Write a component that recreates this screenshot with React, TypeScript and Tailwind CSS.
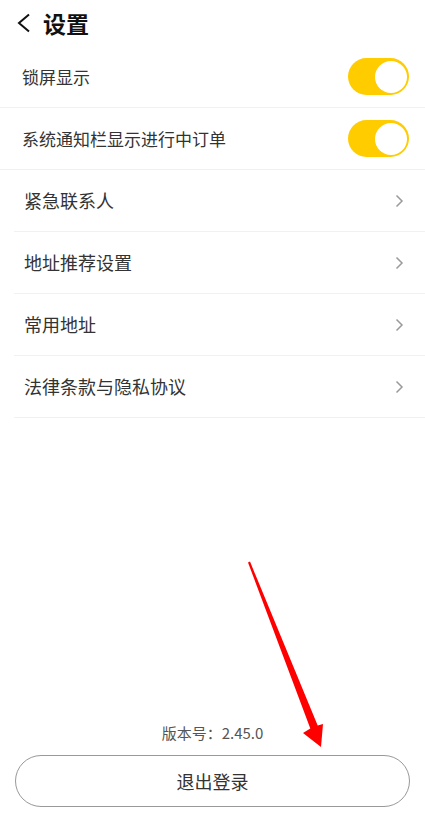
const font = { fontFamily: '"Noto Sans CJK SC", "Noto Sans", sans-serif' };

function Toggle() {
  return (
    <div className="w-[61px] h-[37px] rounded-full bg-[#ffcc00] flex items-center justify-end pr-[2px]">
      <div className="w-[32px] h-[32px] rounded-full bg-white" />
    </div>
  );
}

function Chevron() {
  return (
    <svg width="9" height="14" viewBox="0 0 9 14" fill="none">
      <path d="M1.5 1.5 L7 7 L1.5 12.5" stroke="#9a9a9a" strokeWidth="1.5" />
    </svg>
  );
}

const links = ["紧急联系人", "地址推荐设置", "常用地址", "法律条款与隐私协议"];

export default function App() {
  return (
    <div className="relative w-[425px] min-h-[816px] bg-white flex flex-col" style={font}>
      <div className="h-[46px] flex items-center pl-[17px] gap-[12px]">
        <svg width="14" height="20" viewBox="0 0 14 20" fill="none">
          <path d="M12 1.5 L2 10 L12 18.5" stroke="#111" strokeWidth="2" />
        </svg>
        <span className="text-[23px] font-semibold text-[#111] leading-none">设置</span>
      </div>

      {["锁屏显示", "系统通知栏显示进行中订单"].map((label) => (
        <div key={label} className="h-[62px] flex items-center justify-between pl-[22px] pr-[16px] border-b border-[#f1f1f1]">
          <span className="text-[17px] text-[#333]">{label}</span>
          <Toggle />
        </div>
      ))}

      <div className="pl-[14px]">
        {links.map((label) => (
          <div key={label} className="h-[62px] flex items-center justify-between pl-[10px] pr-[21px] border-b border-[#f1f1f1]">
            <span className="text-[18px] text-[#333]">{label}</span>
            <Chevron />
          </div>
        ))}
      </div>

      <div className="flex-1" />

      <div className="text-center text-[15px] leading-[22px] text-[#555]">版本号：2.45.0</div>
      <div className="px-[15px] mt-[11px] mb-[9px]">
        <button className="w-full h-[52px] rounded-full border border-[#999] text-[18px] text-[#333]">退出登录</button>
      </div>

      {/* red pointer arrow */}
      <svg className="absolute left-0 top-0 pointer-events-none" width="425" height="816" viewBox="0 0 425 816">
        <path d="M248 562.4 L250 561.6 L317.7 725.6 L323 724 L321 747 L303 733 L310.3 728.4 Z" fill="#ff0000" />
      </svg>
    </div>
  );
}
